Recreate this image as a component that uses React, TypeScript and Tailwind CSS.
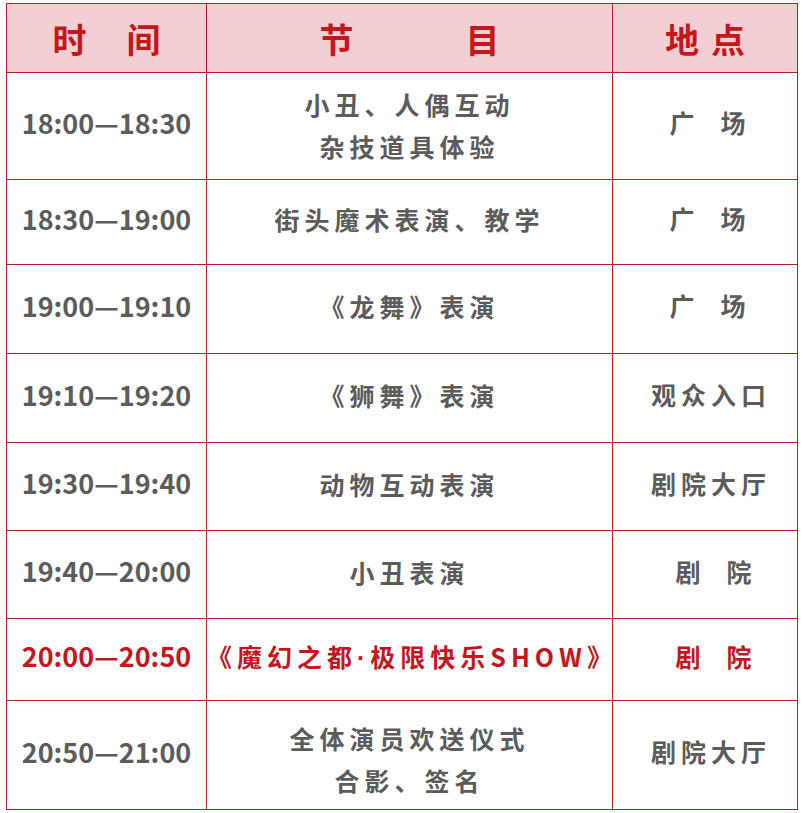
type Row = {
  time: string;
  program: string[];
  place: string[];
  placePad: string;
  height: string;
  shift: string;
  highlight?: boolean;
};

const rows: Row[] = [
  { time: '18:00—18:30', program: ['小丑、人偶互动', '杂技道具体验'], place: ['广', '场'], placePad: 'pl-[5px]', height: 'h-[107px]', shift: 'pb-[2px]' },
  { time: '18:30—19:00', program: ['街头魔术表演、教学'], place: ['广', '场'], placePad: 'pl-[5px]', height: 'h-[85px]', shift: 'pb-[6px]' },
  { time: '19:00—19:10', program: ['《龙舞》表演'], place: ['广', '场'], placePad: 'pl-[5px]', height: 'h-[89px]', shift: 'pb-[6px]' },
  { time: '19:10—19:20', program: ['《狮舞》表演'], place: ['观众入口'], placePad: 'pl-[12px]', height: 'h-[89px]', shift: 'pb-[6px]' },
  { time: '19:30—19:40', program: ['动物互动表演'], place: ['剧院大厅'], placePad: 'pl-[12px]', height: 'h-[88px]', shift: 'pb-[6px]' },
  { time: '19:40—20:00', program: ['小丑表演'], place: ['剧', '院'], placePad: 'pl-[17px]', height: 'h-[88px]', shift: 'pb-[6px]' },
  {
    time: '20:00—20:50',
    program: ['《魔幻之都·极限快乐SHOW》'],
    place: ['剧', '院'],
    placePad: 'pl-[17px]',
    height: 'h-[82px]',
    shift: 'pb-[6px]',
    highlight: true
  },
  { time: '20:50—21:00', program: ['全体演员欢送仪式', '合影、签名'], place: ['剧院大厅'], placePad: 'pl-[12px]', height: 'h-[109px]', shift: 'pt-[8px]' }
];

const cell = 'border border-[#b3202d] p-0 text-center align-middle';

const App = () => {
  return (
    <div className="bg-white pl-[6px] pt-[3px] font-['Noto_Sans_CJK_SC',sans-serif] font-bold">
      <table className="w-[791px] table-fixed border-collapse">
        <colgroup>
          <col className="w-[200px]" />
          <col className="w-[406px]" />
          <col className="w-[185px]" />
        </colgroup>
        <thead>
          <tr className="h-[69px] bg-[#f2cfd2] text-[34px] text-[#c4161c]">
            <th className={cell}>
              <div className="flex justify-center gap-[40px]">
                <span>时</span>
                <span>间</span>
              </div>
            </th>
            <th className={cell}>
              <div className="flex justify-center gap-[112px]">
                <span>节</span>
                <span>目</span>
              </div>
            </th>
            <th className={cell}>
              <div className="flex justify-center gap-[12px]">
                <span>地</span>
                <span>点</span>
              </div>
            </th>
          </tr>
        </thead>
        <tbody>
          {rows.map((row) => {
            const color = row.highlight ? 'text-[#c4161c]' : 'text-[#5c5c5c]';
            const split = row.place.length > 1;
            return (
              <tr key={row.time} className={`${row.height} ${color}`}>
                <td className={`${cell} text-[27px]`}>
                  <div className="pb-[6px]">{row.time}</div>
                </td>
                <td className={`${cell} whitespace-nowrap text-[25px] leading-[42px] tracking-[5px]`}>
                  {row.highlight ? (
                    <div className={`${row.shift} pr-[4px]`}>
                      《魔幻之都<span className="font-['Liberation_Sans',sans-serif]">·</span>极限快乐SHOW》
                    </div>
                  ) : (
                    <div className={row.shift}>
                      {row.program.map((line) => (
                        <div key={line}>{line}</div>
                      ))}
                    </div>
                  )}
                </td>
                <td className={`${cell} text-[25px]`}>
                  <div
                    className={`flex justify-center pb-[6px] ${row.placePad} ${
                      split ? 'gap-[26px]' : 'tracking-[5px]'
                    }`}
                  >
                    {row.place.map((p) => (
                      <span key={p}>{p}</span>
                    ))}
                  </div>
                </td>
              </tr>
            );
          })}
        </tbody>
      </table>
    </div>
  );
};

export default App;
